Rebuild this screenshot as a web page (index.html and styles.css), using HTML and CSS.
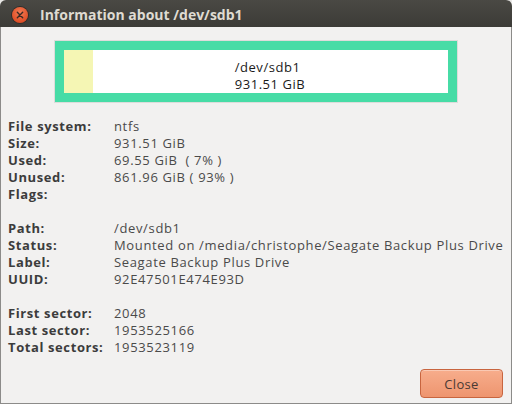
FILE: index.html
```html
<!DOCTYPE html>
<html>
<head>
<meta charset="utf-8">
<link rel="stylesheet" href="styles.css">
</head>
<body>
<div class="window">
  <div class="titlebar">
    <span class="close-dot"><svg width="16" height="16" viewBox="0 0 16 16"><path d="M5.3 5.3 L10.7 10.7 M10.7 5.3 L5.3 10.7" stroke="#3a2a24" stroke-width="1.4" stroke-linecap="round"/></svg></span>
    <span class="title">Information about /dev/sdb1</span>
  </div>
  <div class="body">
    <div class="part-box">
      <div class="part-inner">
        <div class="used-fill"></div>
        <div class="part-text">
          <div class="part-lines">
            <div>/dev/sdb1</div>
            <div>931.51 GiB</div>
          </div>
        </div>
      </div>
    </div>
    <div class="info">
      <span class="lbl">File system:</span><span class="val">ntfs</span>
      <span class="lbl">Size:</span><span class="val">931.51 GiB</span>
      <span class="lbl">Used:</span><span class="val">69.55 GiB&nbsp;&nbsp;( 7% )</span>
      <span class="lbl">Unused:</span><span class="val">861.96 GiB ( 93% )</span>
      <span class="lbl">Flags:</span><span class="val"></span>
      <span class="blank"></span>
      <span class="lbl">Path:</span><span class="val">/dev/sdb1</span>
      <span class="lbl">Status:</span><span class="val">Mounted on /media/christophe/Seagate Backup Plus Drive</span>
      <span class="lbl">Label:</span><span class="val">Seagate Backup Plus Drive</span>
      <span class="lbl">UUID:</span><span class="val">92E47501E474E93D</span>
      <span class="blank"></span>
      <span class="lbl">First sector:</span><span class="val">2048</span>
      <span class="lbl">Last sector:</span><span class="val">1953525166</span>
      <span class="lbl">Total sectors:</span><span class="val">1953523119</span>
    </div>
    <div class="actions">
      <button class="btn-close">Close</button>
    </div>
  </div>
</div>
</body>
</html>
```
FILE: styles.css
```css
html, body {
  margin: 0;
  padding: 0;
  background: #f2f1f0;
}
.window {
  width: 512px;
  height: 404px;
  box-sizing: border-box;
  display: flex;
  flex-direction: column;
  font-family: "Open Sans", "DejaVu Sans", sans-serif;
  font-size: 13px;
  letter-spacing: 0.65px;
  background: #e9e8e6;
}
.titlebar {
  height: 27px;
  flex: none;
  display: flex;
  align-items: center;
  background: linear-gradient(#4a4944, #3c3b37);
  border-radius: 6px 6px 0 0;
  padding-left: 12px;
}
.close-dot {
  width: 16px;
  height: 16px;
  border-radius: 50%;
  background: radial-gradient(circle at 50% 35%, #f27c55, #df4f27 70%, #b83d1c);
  box-shadow: 0 0 0 1px #2e2d2a;
  display: flex;
  margin-top: 2px;
}
.title {
  margin-left: 12px;
  color: #dfdbd2;
  font-weight: bold;
  font-size: 14px;
  letter-spacing: 0;
  margin-top: 1px;
}
.body {
  flex: 1;
  display: flex;
  flex-direction: column;
  background: #f2f1f0;
  border: 1px solid #8c8b89;
  border-top: none;
  padding: 13px 7px 5px 7px;
}
.part-box {
  align-self: center;
  box-sizing: border-box;
  width: 404px;
  border: 1px solid #dddcdb;
  background: #47dca6;
  padding: 9px;
  margin-right: 1px;
}
.part-inner {
  height: 43px;
  background: #ffffff;
  display: flex;
}
.used-fill {
  width: 29px;
  background: #f5f6b4;
}
.part-text {
  flex: 1;
  display: flex;
  justify-content: center;
  align-items: center;
  color: #1a1a1a;
  padding-top: 8px;
  letter-spacing: 0.55px;
}
.part-lines {
  line-height: 17px;
}
.info {
  margin-top: 15px;
  display: grid;
  grid-template-columns: 106px 1fr;
  line-height: 17px;
  color: #3c3c3c;
}
.lbl {
  font-weight: bold;
  color: #3c3c3c;
  letter-spacing: 0.6px;
}
.val {
  color: #4a4a4a;
  white-space: nowrap;
}
.blank {
  grid-column: 1 / 3;
  height: 17px;
}
.actions {
  margin-top: auto;
  display: flex;
  justify-content: flex-end;
  padding-right: 1px;
}
.btn-close {
  width: 83px;
  height: 29px;
  border: 1px solid #c8653f;
  border-radius: 4px;
  background: linear-gradient(#f7ad8c, #ee956f);
  color: #4a3a34;
  font-family: "Open Sans", "DejaVu Sans", sans-serif;
  font-size: 13px;
  letter-spacing: 0.3px;
  box-shadow: inset 0 1px 0 rgba(255,255,255,0.35);
}
```
